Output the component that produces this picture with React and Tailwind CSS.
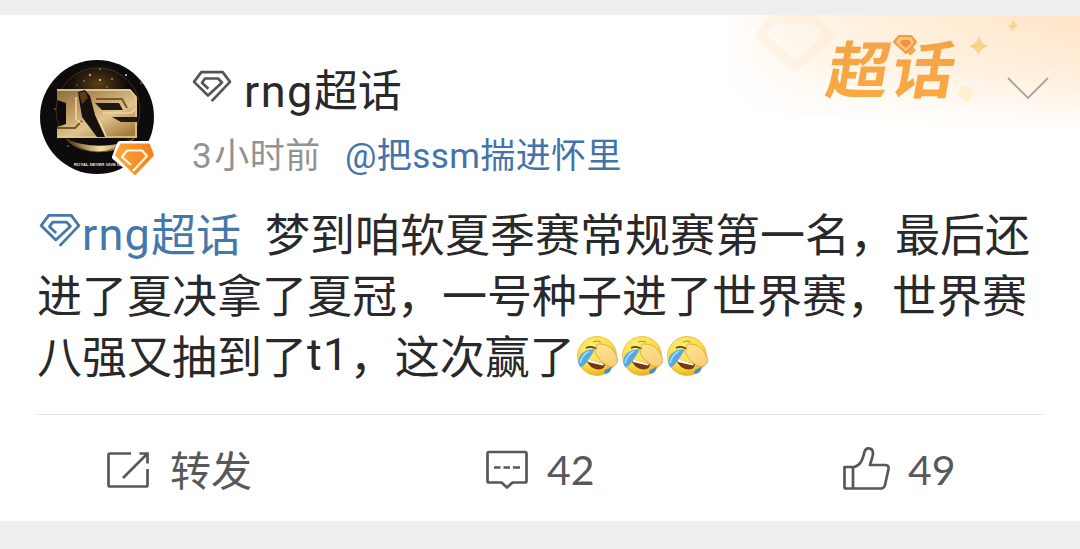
import clsx from "clsx";

const CJK = "font-['Noto_Sans_CJK_SC',sans-serif]";

// Latin letters and digits sit next to the Chinese text in another face
function Latin({ children, className }) {
  return (
    <span className={clsx("font-['Roboto','Noto_Sans_CJK_SC',sans-serif]", className)}>
      {children}
    </span>
  );
}

function Diamond({ className }) {
  return (
    <svg viewBox="4 8 120 98" className={className} fill="none" stroke="currentColor">
      <path
        d="M63 101 118 43 96 14H32L10 43 52 84 94 45 82 33H43L34 46 53 64"
        strokeWidth="8"
        strokeLinejoin="round"
      />
    </svg>
  );
}

function Avatar() {
  return (
    <svg viewBox="0 0 118 118" className="-mr-1 h-[118px] w-[118px] shrink-0">
      <defs>
        <clipPath id="round">
          <circle cx="57" cy="57" r="57" />
        </clipPath>
        <linearGradient id="gold" x1="0" y1="0" x2="0.8" y2="1">
          <stop offset="0" stopColor="#8a6a3c" />
          <stop offset="0.35" stopColor="#bb9862" />
          <stop offset="0.65" stopColor="#e0c48e" />
          <stop offset="1" stopColor="#a37b3d" />
        </linearGradient>
        <linearGradient id="arc" x1="0" x2="1">
          <stop offset="0" stopColor="#4b3213" />
          <stop offset="0.5" stopColor="#f7df9c" />
          <stop offset="1" stopColor="#6b4a1e" />
        </linearGradient>
        <radialGradient id="dust">
          <stop offset="0" stopColor="#5c3c15" />
          <stop offset="1" stopColor="#5c3c15" stopOpacity="0" />
        </radialGradient>
        <linearGradient id="badge" x1="0" x2="1">
          <stop offset="0" stopColor="#f9a63a" />
          <stop offset="1" stopColor="#f4801f" />
        </linearGradient>
      </defs>
      <g clipPath="url(#round)">
        <rect width="114" height="114" fill="#0d0b0c" />
        <ellipse cx="58" cy="24" rx="30" ry="20" fill="url(#dust)" />
        <g fill="#c99a58">
          <circle cx="50" cy="15" r="1.2" />
          <circle cx="60" cy="9" r="0.9" />
          <circle cx="60" cy="20" r="1" fill="#f0d9a8" />
          <circle cx="44" cy="21" r="0.8" />
          <circle cx="72" cy="19" r="0.9" />
          <circle cx="86" cy="15" r="1" fill="#efe2c4" />
          <circle cx="67" cy="27" r="0.8" />
          <circle cx="37" cy="25" r="0.6" />
          <circle cx="101" cy="23" r="0.8" />
          <circle cx="28" cy="86" r="0.8" />
          <circle cx="15" cy="49" r="0.8" />
        </g>
        <path d="M25 78C38 96 80 98 97 76 82 88 44 89 25 78Z" fill="url(#arc)" />
        <circle cx="58" cy="50" r="42" fill="none" stroke="#4f3b22" strokeWidth="0.8" />
        <path d="M17 29H90L97 37V78H17V67L26 64V43L17 40Z" fill="url(#gold)" />
        <path d="M17 30H90L96 37" fill="none" stroke="#edd8a5" strokeWidth="1.3" />
        <path d="M18 77H96V38" fill="none" stroke="#e8ca82" strokeWidth="1.6" />
        <path d="M17 68H35L42 61M56 39H82L87 48" fill="none" stroke="#7a5526" strokeWidth="2" />
        <path d="M55 43H79L83 50H62Z" fill="#21180f" />
        <path d="M72 57H97V62H81Z" fill="#21180f" />
        <path d="M63 53H91L95 49" fill="none" stroke="#f5e0ad" strokeWidth="1.2" />
        <path d="M38 32 45 30 50 36 55 55 65 77H57L42 57Z" fill="#17100c" />
        <path d="M39 33 45 31 48 38 42 44Z" fill="#60391d" />
        <path d="M36 37V59L42 64M59 60 66 76" fill="none" stroke="#f1dba7" strokeWidth="1.4" />
        <text
          x="34"
          y="105.5"
          fill="#e6e2dc"
          fontFamily="Liberation Sans"
          fontWeight="700"
          fontSize="4.3"
          textLength="49"
          lengthAdjust="spacingAndGlyphs"
        >
          ROYAL NEVER GIVE UP
        </text>
      </g>
      <path
        d="M80 84H110L114 95 95 114 75 97Z"
        fill="#fff"
        stroke="#fff"
        strokeWidth="6"
        strokeLinejoin="round"
      />
      <path
        d="M81 84.500H109L113 95 95 114 76 95Z"
        fill="url(#badge)"
        stroke="url(#badge)"
        strokeWidth="2"
        strokeLinejoin="round"
      />
      <path
        d="M93 111 107 96 102 90.500H87L82 97 91 105"
        fill="none"
        stroke="#fff6e2"
        strokeWidth="2.2"
        strokeLinejoin="round"
      />
    </svg>
  );
}

function Banner() {
  return (
    <svg viewBox="0 0 360 130" className="absolute top-0 right-0 h-[130px] w-[360px]">
      <defs>
        <linearGradient id="warm" x1="0" x2="1">
          <stop offset="0" stopColor="#fff1dd" stopOpacity="0" />
          <stop offset="0.3" stopColor="#fff2e1" />
          <stop offset="0.65" stopColor="#ffebd3" />
          <stop offset="1" stopColor="#ffe5c9" />
        </linearGradient>
        <linearGradient id="fade" x1="0.45" y1="0" x2="0.37" y2="1">
          <stop offset="0" stopColor="#fff" />
          <stop offset="0.35" stopColor="#fff" stopOpacity="0.75" />
          <stop offset="0.85" stopColor="#fff" stopOpacity="0" />
        </linearGradient>
        <mask id="down">
          <rect width="360" height="130" fill="url(#fade)" />
        </mask>
        <linearGradient id="ink" x1="0" y1="0" x2="0" y2="1">
          <stop offset="0" stopColor="#f2a24a" />
          <stop offset="1" stopColor="#fbaa40" />
        </linearGradient>
      </defs>
      <rect width="360" height="130" fill="url(#warm)" mask="url(#down)" />
      <g fill="none" stroke="#fde3cb" strokeWidth="9" strokeLinejoin="round" opacity="0.3">
        <path d="M54 4H95L110 22 75 52 40 20Z" />
      </g>
      <text
        transform="translate(104 77.500) skewX(-10)"
        fill="url(#ink)"
        fontFamily="Noto Sans CJK SC"
        fontWeight="700"
        fontSize="62"
        textLength="127"
      >
        超话
      </text>
      <path
        d="M179 21H191L196 27 186 38 174 27Z"
        fill="#fbc181"
        stroke="#f39a3c"
        strokeWidth="2"
        strokeLinejoin="round"
      />
      <path d="M182 25H189L191 28 186 33 180 28Z" fill="#f2913b" />
      <path d="M259 21Q261 29 268 31 261 33 258 40 256 33 249 31 257 29 259 21Z" fill="#fbd089" />
      <path d="M294 5Q295 9 298 11 294 12 292 16 291 12 288 11 292 9 294 5Z" fill="#fbd38c" />
      <path d="M241 72H250L254 78 247 88 237 79Z" fill="#fff0cd" />
    </svg>
  );
}

function Facepalm() {
  return (
    <svg viewBox="0 0 45 45" className="mt-1 h-[45px] w-[45px] shrink-0">
      <defs>
        <radialGradient id="face" cx="0.4" cy="0.3" r="0.75">
          <stop offset="0" stopColor="#fff07a" />
          <stop offset="0.65" stopColor="#fbdc3c" />
          <stop offset="1" stopColor="#e5a71c" />
        </radialGradient>
        <linearGradient id="hand" x1="0" y1="0" x2="0.6" y2="1">
          <stop offset="0" stopColor="#ffe58f" />
          <stop offset="1" stopColor="#fbcf7c" />
        </linearGradient>
      </defs>
      <circle cx="22" cy="22" r="19.5" fill="url(#face)" stroke="#e0b23a" strokeWidth="0.7" />
      <path d="M11 25 30 30Q30 35 24 35.500 14 35 11 25Z" fill="#7c3518" />
      <path d="M12 25 29 30 28 31.500 13 28Z" fill="#fff" />
      <path d="M12 16 20 15Q17 21 13 26 8 34 5 33 1 27 6 20Z" fill="#58a8e2" />
      <path d="M14 17Q7 21 5 29" fill="none" stroke="#a3dcf8" strokeWidth="1.6" />
      <path d="M30 36 36 33Q37 38 31 40 28 40 30 36Z" fill="#4b8bcb" />
      <path d="M11 14Q16 11.500 21 14.500" fill="none" stroke="#614015" strokeWidth="1.6" />
      <path
        d="M22 15Q20 9 25 10 33 10 38 16 44 24 42 29 38 35 31 31 24 26 20 19 20 16 22 15Z"
        fill="url(#hand)"
        stroke="#d9a544"
        strokeWidth="0.9"
      />
      <path d="M18 8Q22 6 26 8" fill="none" stroke="#b98224" strokeWidth="0.9" />
    </svg>
  );
}

function RepostIcon() {
  return (
    <svg viewBox="0 0 44 40" className="h-10 w-11" fill="none" stroke="currentColor" strokeWidth="2.7">
      <path d="M25 3.500H4Q2.500 3.500 2.500 5V35Q2.500 36.500 4 36.500H40Q41.500 36.500 41.500 35V19" />
      <path d="M17 28 41 4M33.500 3.500H41.500V13.500" />
    </svg>
  );
}

function CommentIcon() {
  return (
    <svg viewBox="0 0 44 42" className="h-[42px] w-11" fill="none" stroke="currentColor" strokeWidth="2.7">
      <path
        d="M4 3H40Q41.500 3 41.500 4.500V32Q41.500 33.500 40 33.500H27.500L22 38.500 16.500 33.500H4Q2.500 33.500 2.500 32V4.500Q2.500 3 4 3Z"
        strokeLinejoin="round"
      />
      <path d="M9 18.500H15.500M18.500 18.500H25M28 18.500H35" />
    </svg>
  );
}

function LikeIcon() {
  return (
    <svg viewBox="0 0 48 46" className="-mt-1 h-[46px] w-12" fill="none" stroke="currentColor" strokeWidth="2.7" strokeLinejoin="round">
      <path d="M3 22H12C20 20 21 12 22.500 7 23.500 2 30.500 2 31 8 31 13 29 15 28 20H43Q47 20 46.500 24L43 40Q42 43.500 39 43.500H4Q2.500 43.500 2.500 42V22Z" />
      <path d="M11 22V43" />
    </svg>
  );
}

function Post() {
  return (
    <article className="relative h-[506px] bg-white px-[37px] pt-[45px]">
      <Banner />
      <svg viewBox="0 0 44 26" className="absolute top-[61px] left-[1006px] h-[26px] w-11">
        <path d="M2 2 22 22 42 2" fill="none" stroke="#aaa29b" strokeWidth="1.8" />
      </svg>

      <header className="flex h-[118px] pl-[3px]">
        <Avatar />
        <div className="pl-[38px]">
          <div className="flex h-[59px] items-center text-[#29292b]">
            <Diamond className="-mt-1.5 mr-3 h-[33px] w-[40px] text-[#555]" />
            <h1 className="text-[44px] leading-[58px] whitespace-nowrap">
              <Latin className="text-[45px] tracking-[1.5px]">rng</Latin>超话
            </h1>
          </div>
          <div className="flex h-[71px] items-center text-[35px] leading-[71px] whitespace-nowrap">
            <span className="w-[153px] tracking-[0.5px] text-[#929292]">
              <Latin className="mr-0.5">3</Latin>小时前
            </span>
            <span className="tracking-[0.4px] text-[#4273a9]">
              <Latin>@</Latin>把<Latin>ssm</Latin>揣进怀里
            </span>
          </div>
        </div>
      </header>

      {/* post text, three fixed lines */}
      <div className="mt-[22px] text-[45px] leading-[61px] whitespace-nowrap text-[#29292b]">
        <p className="flex items-center">
          <span className="flex w-[228px] items-center text-[#4478ad]">
            <Diamond className="-mt-1 ml-0.5 h-[35px] w-[42px]" />
            <Latin className="mt-1 ml-px tracking-[1.2px]">rng</Latin>超话
          </span>
          梦到咱软夏季赛常规赛第一名，最后还
        </p>
        <p className="-mt-0.5">进了夏决拿了夏冠，一号种子进了世界赛，世界赛</p>
        <p className="flex items-center">
          八强又抽到了<Latin className="tracking-[1.3px]">t1</Latin>，这次赢了
          <Facepalm />
          <Facepalm />
          <Facepalm />
        </p>
      </div>

      <footer className="mt-[29px] flex items-center border-t border-[#e4e4e4] pt-[25px] text-[41px] leading-[60px] text-[#58585a]">
        <div className="flex w-[378px] items-center pl-[69px]">
          <RepostIcon />
          <span className="-mt-1 ml-5">转发</span>
        </div>
        <div className="flex w-[357px] items-center pl-[70px]">
          <CommentIcon />
          <span className="ml-[18px] font-[Lato]">42</span>
        </div>
        <div className="flex items-center pl-[70px]">
          <LikeIcon />
          <span className="ml-[18px] font-[Lato]">49</span>
        </div>
      </footer>
    </article>
  );
}

export default function App() {
  return (
    <main className={clsx("flex h-[549px] w-[1080px] flex-col overflow-hidden bg-[#efedee]", CJK)}>
      <div className="h-[15px] shrink-0 bg-[#eeeeef]" />
      <Post />
    </main>
  );
}
